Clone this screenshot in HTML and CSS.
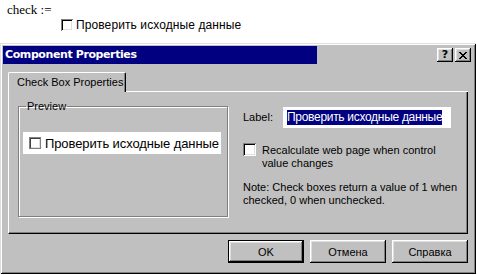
FILE: index.html
```html
<!DOCTYPE html>
<html>
<head>
<meta charset="utf-8">
<link rel="stylesheet" href="styles.css">
</head>
<body>
<div class="top">
  <div class="expr">check :=</div>
  <div class="doc-cb"><span class="box sunken"></span><span class="doc-cb-text">Проверить исходные данные</span></div>
</div>
<div class="dialog">
  <div class="titlebar">
    <div class="title">Component Properties</div>
    <div class="caption-btns">
      <span class="cbtn help">?</span>
      <span class="cbtn close"><svg width="8" height="7" viewBox="0 0 8 7"><path d="M0 0h2v1h1v1h2v-1h1v-1h2v1h-1v1h-1v1h-1v1h1v1h1v1h1v1h-2v-1h-1v-1h-2v1h-1v1h-2v-1h1v-1h1v-1h1v-1h-1v-1h-1v-1h-1z" fill="#000"/></svg></span>
    </div>
  </div>
  <div class="body">
    <div class="tabs"><div class="tab">Check Box Properties</div><div class="tab-rest"></div></div>
    <div class="page">
      <fieldset class="group">
        <legend class="legend">Preview</legend>
        <div class="preview-row"><span class="box flatbox"></span><span class="preview-text">Проверить исходные данные</span></div>
      </fieldset>
      <div class="props">
        <div class="label-row">
          <span class="label">Label:</span>
          <div class="input"><span class="sel">Проверить исходные данные</span></div>
        </div>
        <div class="recalc">
          <span class="box sunken"></span>
          <span class="recalc-text">Recalculate web page when control<br>value changes</span>
        </div>
        <div class="note">Note: Check boxes return a value of 1 when<br>checked, 0 when unchecked.</div>
      </div>
    </div>
    <div class="buttons">
      <div class="btn default"><span class="btn-in">OK</span></div>
      <div class="btn"><span class="btn-in">Отмена</span></div>
      <div class="btn"><span class="btn-in">Справка</span></div>
    </div>
  </div>
</div>
</body>
</html>
```
FILE: styles.css
```css
html, body {
  margin: 0;
  padding: 0;
  background: #ffffff;
}
body {
  width: 477px;
  height: 275px;
  overflow: hidden;
  font-family: "Liberation Sans", Arial, sans-serif;
  color: #000;
}
.top {
  height: 43px;
  box-sizing: border-box;
  padding: 3px 0 0 7px;
}
.expr {
  font-family: "Liberation Serif", "Times New Roman", serif;
  font-size: 13px;
  line-height: 13px;
}
.doc-cb {
  display: flex;
  align-items: center;
  margin: 2px 0 0 54px;
  height: 13px;
}
.doc-cb-text {
  font-size: 12px;
  margin-left: 3px;
  letter-spacing: 0.1px;
}
.box {
  display: inline-block;
  width: 12px;
  height: 12px;
  background: #fff;
  flex: none;
}
.sunken {
  box-shadow: inset 1px 1px #808080, inset -1px -1px #fff, inset 2px 2px #000, inset -2px -2px #dfdfdf;
}
.flatbox {
  box-shadow: inset 1px 1px #808080, inset -1px -1px #808080, inset 2px 2px #404040, inset -2px -2px #dfdfdf;
}
.dialog {
  width: 476px;
  height: 231px;
  box-sizing: border-box;
  background: #c0c0c0;
  padding: 3px;
  box-shadow: inset 1px 1px #dfdfdf, inset -1px -1px #000, inset 2px 2px #fff, inset -2px -2px #808080;
  display: flex;
  flex-direction: column;
}
.titlebar {
  height: 18px;
  display: flex;
  align-items: center;
  justify-content: space-between;
}
.title {
  width: 314px;
  height: 18px;
  background: #000080;
  color: #fff;
  font-family: "DejaVu Sans", Verdana, sans-serif;
  font-weight: bold;
  font-size: 11px;
  line-height: 18px;
  padding-left: 2px;
  box-sizing: border-box;
  letter-spacing: -0.4px;
}
.caption-btns {
  display: flex;
  gap: 2px;
  margin-right: 2px;
}
.cbtn {
  width: 16px;
  height: 14px;
  box-sizing: border-box;
  background: #c0c0c0;
  box-shadow: inset -1px -1px #000, inset 1px 1px #fff, inset -2px -2px #808080, inset 2px 2px #dfdfdf;
  display: flex;
  align-items: center;
  justify-content: center;
}
.help {
  font-family: "DejaVu Sans", sans-serif;
  font-weight: bold;
  font-size: 11px;
  line-height: 14px;
}
.close svg {
  display: block;
}
.body {
  flex: 1;
  display: flex;
  flex-direction: column;
  padding: 8px 5px 8px 5px;
}
.tabs {
  display: flex;
  height: 20px;
}
.tab {
  width: 118px;
  height: 20px;
  box-sizing: border-box;
  border-top: 1px solid #fff;
  border-left: 1px solid #fff;
  border-right: 1px solid #000;
  border-top-left-radius: 2px;
  border-top-right-radius: 2px;
  box-shadow: inset -1px 0 #808080;
  font-size: 11px;
  line-height: 17px;
  padding-left: 8px;
  padding-top: 1px;
}
.tab-rest {
  flex: 1;
  border-bottom: 1px solid #fff;
  box-sizing: border-box;
}
.page {
  height: 142px;
  box-sizing: border-box;
  border-left: 1px solid #fff;
  border-bottom: 1px solid #000;
  border-right: 1px solid #000;
  box-shadow: inset -1px -1px #808080;
  display: flex;
  padding: 9px 0 0 9px;
}
.group {
  margin: 0;
  width: 210px;
  height: 116px;
  box-sizing: border-box;
  border: 1px solid #808080;
  box-shadow: inset 1px 1px #fff, 1px 1px #fff;
  padding: 0 0 0 4px;
  min-width: 0;
}
.legend {
  font-size: 11px;
  line-height: 11px;
  padding: 0 1px;
  margin-left: 3px;
}
.preview-row {
  margin-top: 20px;
  width: 198px;
  height: 22px;
  background: #fff;
  display: flex;
  align-items: center;
  padding-left: 6px;
  box-sizing: border-box;
}
.preview-text {
  font-size: 13px;
  margin-left: 4px;
  letter-spacing: -0.1px;
  white-space: nowrap;
}
.props {
  margin-left: 15px;
  padding-top: 6px;
  font-size: 11px;
  line-height: 13px;
}
.label-row {
  display: flex;
  align-items: center;
  height: 21px;
}
.label {
  width: 40px;
}
.input {
  width: 168px;
  height: 21px;
  background: #fff;
  box-sizing: border-box;
  padding: 3px 0 0 4px;
}
.sel {
  display: inline-block;
  background: #000080;
  color: #fff;
  font-size: 12px;
  line-height: 15px;
  letter-spacing: -0.3px;
  white-space: nowrap;
}
.recalc {
  display: flex;
  margin-top: 15px;
}
.recalc .box {
  width: 13px;
  height: 13px;
}
.recalc-text {
  margin-left: 6px;
  margin-top: 1px;
}
.note {
  margin-top: 11px;
}
.buttons {
  margin-top: 6px;
  display: flex;
  justify-content: flex-end;
  gap: 6px;
}
.btn {
  width: 76px;
  height: 23px;
  box-sizing: border-box;
  box-shadow: inset -1px -1px #000, inset 1px 1px #fff, inset -2px -2px #808080, inset 2px 2px #dfdfdf;
  display: flex;
  font-size: 11px;
}
.btn-in {
  flex: 1;
  display: flex;
  align-items: center;
  justify-content: center;
}
.default {
  border: 1px solid #000;
  box-shadow: none;
}
.default .btn-in {
  box-shadow: inset -1px -1px #000, inset 1px 1px #fff, inset -2px -2px #808080, inset 2px 2px #dfdfdf;
}
```
